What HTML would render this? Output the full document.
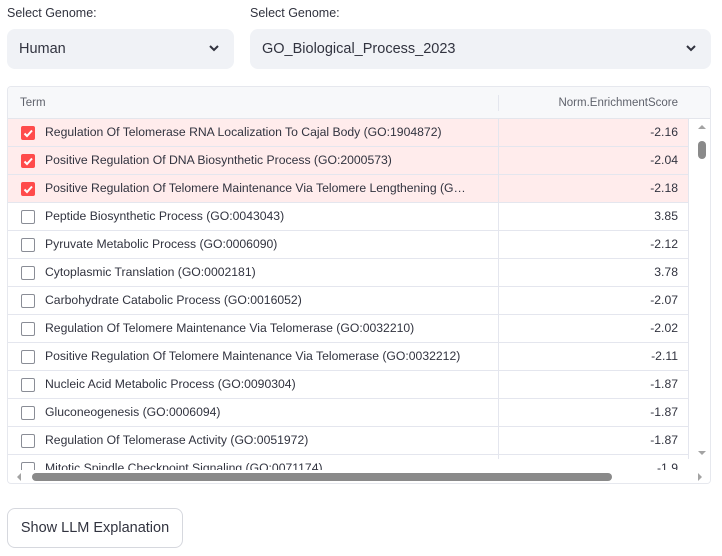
<!DOCTYPE html>
<html><head><meta charset="utf-8"><style>
*{box-sizing:border-box;margin:0;padding:0}
body{width:722px;height:556px;background:#fff;font-family:"Liberation Sans",sans-serif;color:#31333f;position:relative;overflow:hidden}
.lbl{position:absolute;top:6px;font-size:12.5px;color:#31333f}
.sel{position:absolute;top:29px;height:40px;background:#f0f2f6;border-radius:8px;font-size:14.5px;line-height:40px;padding-left:12px}
.sel svg{position:absolute;right:14px;top:15px}
.tbl{position:absolute;left:7px;top:86px;width:704px;height:398px;border:1px solid #e6e8ee;border-radius:4px;overflow:hidden}
.hdr{position:absolute;left:0;top:0;width:704px;height:32px;background:#f7f8fa;border-bottom:1px solid #e4e6ec;font-size:11.5px;color:#5f626c}
.row{position:absolute;left:0;width:680px;height:28px;border-bottom:1px solid #e4e6ee;font-size:12.2px}
.row.s{background:#ffecec}
.cb{position:absolute;left:13px;top:7px;width:14px;height:14px;border:1.5px solid #8a8d96;border-radius:2px;background:#fff}
.s .cb{background:#ff4b4b;border-color:#ff4b4b}
.t{position:absolute;left:37px;top:6px;white-space:nowrap;width:440px;overflow:hidden}
.v{position:absolute;right:10px;top:6px}
.div{position:absolute;left:490px;top:32px;width:1px;height:340px;background:#e4e6ee}
</style></head><body>
<div class="lbl" style="left:7px">Select Genome:</div>
<div class="lbl" style="left:250px">Select Genome:</div>
<div class="sel" style="left:7px;width:227px">Human<svg width="12" height="8" viewBox="0 0 12 8"><path d="M2 2l4 4 4-4" stroke="#31333f" stroke-width="2" fill="none"/></svg></div>
<div class="sel" style="left:250px;width:461px">GO_Biological_Process_2023<svg width="12" height="8" viewBox="0 0 12 8"><path d="M2 2l4 4 4-4" stroke="#31333f" stroke-width="2" fill="none"/></svg></div>
<div class="tbl">
<div class="hdr"><span style="position:absolute;left:12px;top:10px">Term</span><span style="position:absolute;left:490px;top:8px;width:1px;height:16px;background:#e4e6ee"></span><span style="position:absolute;right:34px;top:10px">Norm.EnrichmentScore</span></div>
<div class="row s" style="top:32px"><div class="cb"></div><svg style="position:absolute;left:13px;top:7px" width="14" height="14"><path d="M3.5 7.5l2.5 2.5 5-5.5" stroke="#fff" stroke-width="2" fill="none"/></svg><div class="t">Regulation Of Telomerase RNA Localization To Cajal Body (GO:1904872)</div><div class="v">-2.16</div></div>
<div class="row s" style="top:60px"><div class="cb"></div><svg style="position:absolute;left:13px;top:7px" width="14" height="14"><path d="M3.5 7.5l2.5 2.5 5-5.5" stroke="#fff" stroke-width="2" fill="none"/></svg><div class="t">Positive Regulation Of DNA Biosynthetic Process (GO:2000573)</div><div class="v">-2.04</div></div>
<div class="row s" style="top:88px"><div class="cb"></div><svg style="position:absolute;left:13px;top:7px" width="14" height="14"><path d="M3.5 7.5l2.5 2.5 5-5.5" stroke="#fff" stroke-width="2" fill="none"/></svg><div class="t">Positive Regulation Of Telomere Maintenance Via Telomere Lengthening (G…</div><div class="v">-2.18</div></div>
<div class="row" style="top:116px"><div class="cb"></div><div class="t">Peptide Biosynthetic Process (GO:0043043)</div><div class="v">3.85</div></div>
<div class="row" style="top:144px"><div class="cb"></div><div class="t">Pyruvate Metabolic Process (GO:0006090)</div><div class="v">-2.12</div></div>
<div class="row" style="top:172px"><div class="cb"></div><div class="t">Cytoplasmic Translation (GO:0002181)</div><div class="v">3.78</div></div>
<div class="row" style="top:200px"><div class="cb"></div><div class="t">Carbohydrate Catabolic Process (GO:0016052)</div><div class="v">-2.07</div></div>
<div class="row" style="top:228px"><div class="cb"></div><div class="t">Regulation Of Telomere Maintenance Via Telomerase (GO:0032210)</div><div class="v">-2.02</div></div>
<div class="row" style="top:256px"><div class="cb"></div><div class="t">Positive Regulation Of Telomere Maintenance Via Telomerase (GO:0032212)</div><div class="v">-2.11</div></div>
<div class="row" style="top:284px"><div class="cb"></div><div class="t">Nucleic Acid Metabolic Process (GO:0090304)</div><div class="v">-1.87</div></div>
<div class="row" style="top:312px"><div class="cb"></div><div class="t">Gluconeogenesis (GO:0006094)</div><div class="v">-1.87</div></div>
<div class="row" style="top:340px"><div class="cb"></div><div class="t">Regulation Of Telomerase Activity (GO:0051972)</div><div class="v">-1.87</div></div>
<div class="row" style="top:368px"><div class="cb"></div><div class="t">Mitotic Spindle Checkpoint Signaling (GO:0071174)</div><div class="v">-1.9</div></div>
<div class="div"></div>
<div style="position:absolute;left:680px;top:32px;width:1px;height:340px;background:#e4e6ee"></div>
<div style="position:absolute;left:0;top:383px;width:704px;height:16px;background:#fff"></div>
<div style="position:absolute;left:24px;top:386px;width:580px;height:8px;border-radius:4px;background:#8a8a8a"></div>
<div style="position:absolute;left:9px;top:386px;width:0;height:0;border-top:4px solid transparent;border-bottom:4px solid transparent;border-right:4px solid #a3a3a3"></div>
<div style="position:absolute;left:690px;top:386px;width:0;height:0;border-top:4px solid transparent;border-bottom:4px solid transparent;border-left:4px solid #a3a3a3"></div>
<div style="position:absolute;left:681px;top:32px;width:23px;height:351px;background:#fff"></div>
<div style="position:absolute;left:690px;top:54px;width:8px;height:18px;border-radius:4px;background:#8a8a8a"></div>
<div style="position:absolute;left:690px;top:38px;width:0;height:0;border-left:4px solid transparent;border-right:4px solid transparent;border-bottom:4px solid #a3a3a3"></div>
<div style="position:absolute;left:690px;top:364px;width:0;height:0;border-left:4px solid transparent;border-right:4px solid transparent;border-top:4px solid #a3a3a3"></div>
</div>
<div style="position:absolute;left:7px;top:508px;width:176px;height:40px;border:1px solid #d6d8de;border-radius:8px;font-size:14.5px;line-height:38px;text-align:center">Show LLM Explanation</div>
</body></html>
